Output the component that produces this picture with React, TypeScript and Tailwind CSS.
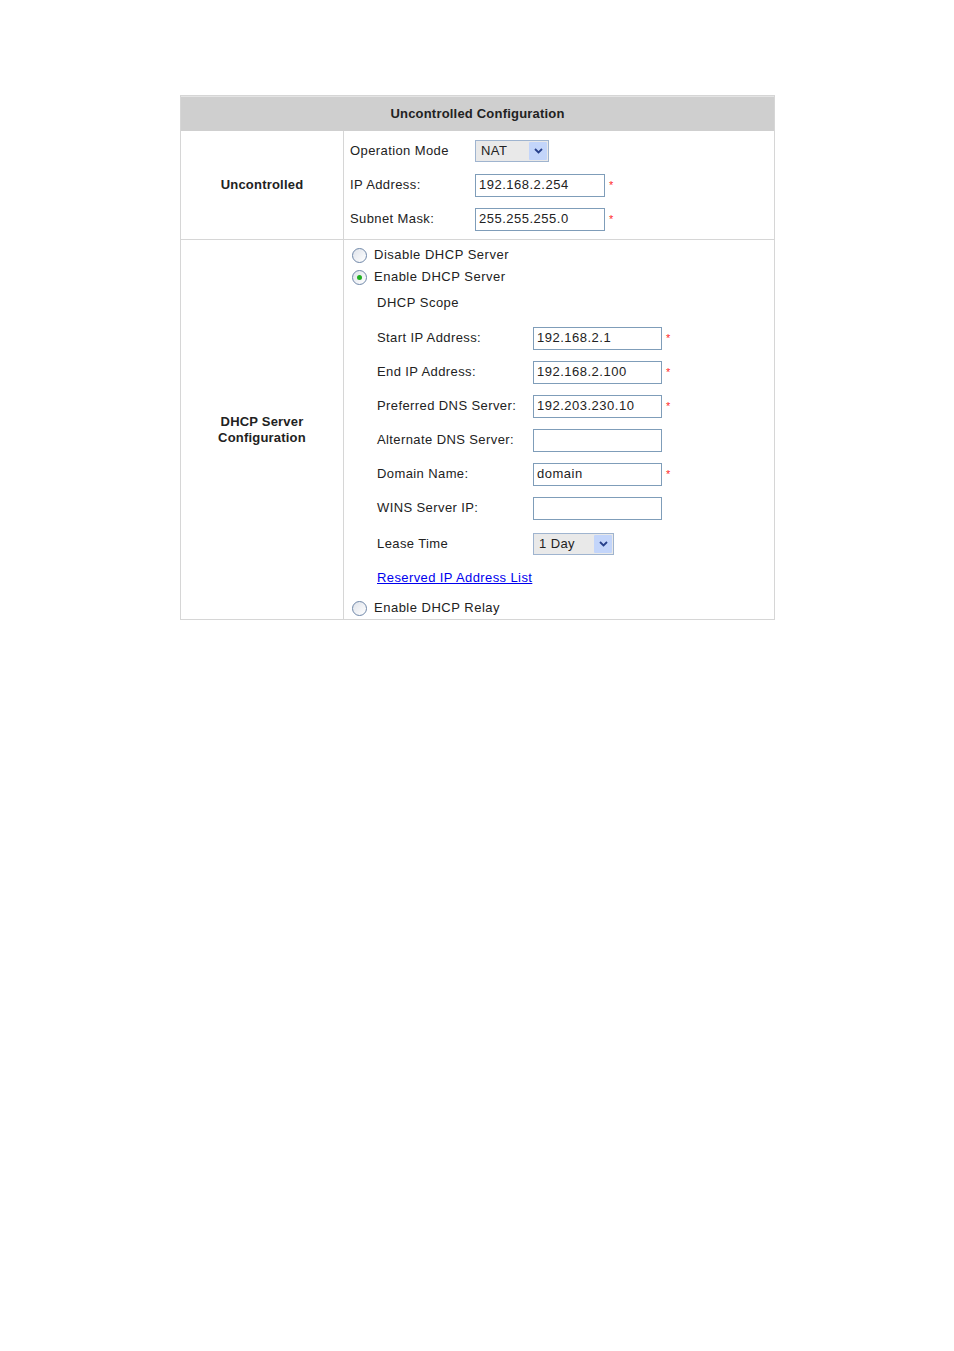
import React from 'react';

const font = { fontFamily: '"Liberation Sans", Arial, sans-serif' };

const Star = () => <span className="ml-[4px] text-[11px] leading-none text-[#ff2a2a]">*</span>;

const TextBox = ({ value, width = 'w-[129px]' }: { value: string; width?: string }) => (
  <div className={`${width} h-[23px] border border-[#7f9db9] bg-white px-[3px] flex items-center text-[13px] tracking-[0.5px] text-[#222]`}>
    {value}
  </div>
);

const SelectBox = ({ value, width }: { value: string; width: string }) => (
  <div className={`${width} h-[22px] border border-[#9fb4cf] bg-[#e9e9e9] flex items-center`}>
    <span className="flex-1 pl-[5px] text-[13px] tracking-[0.4px] text-[#222]">{value}</span>
    <span className="w-[18px] h-[18px] mr-[1px] bg-[#c3d5fa] flex items-center justify-center rounded-[1px]">
      <svg width="9" height="6" viewBox="0 0 9 6">
        <path d="M1 1l3.5 3.5L8 1" fill="none" stroke="#27408b" strokeWidth="1.8" />
      </svg>
    </span>
  </div>
);

const Radio = ({ checked, label }: { checked?: boolean; label: string }) => (
  <div className="h-[22px] flex items-center">
    <span className="w-[15px] h-[15px] rounded-full border border-[#6f87a8] bg-gradient-to-br from-[#dfe3ea] to-white flex items-center justify-center">
      {checked && <span className="w-[5px] h-[5px] rounded-full bg-[#20b020]" />}
    </span>
    <span className="ml-[7px] text-[13px] tracking-[0.5px] text-[#222]">{label}</span>
  </div>
);

const FormRow = ({ label, value, star }: { label: string; value: string; star?: boolean }) => (
  <div className="h-[34px] flex items-center pl-[25px]">
    <span className="w-[156px] text-[13px] tracking-[0.4px] text-[#222]">{label}</span>
    <TextBox value={value} />
    {star && <Star />}
  </div>
);

export default function App() {
  return (
    <div className="min-h-[1351px] bg-white pt-[95px] pl-[180px]" style={font}>
      <div className="w-[595px] border border-[#d6d6d6]">
        {/* Header */}
        <div className="h-[35px] bg-[#cfcfcf] border-t border-[#e4e4e4] flex items-center justify-center text-[13px] font-bold tracking-[0.2px] text-[#222]">
          Uncontrolled Configuration
        </div>

        {/* Uncontrolled */}
        <div className="flex border-b border-[#d6d6d6]">
          <div className="w-[163px] border-r border-[#d6d6d6] flex items-center justify-center text-[13px] font-bold tracking-[0.2px] text-[#222]">
            Uncontrolled
          </div>
          <div className="flex-1 pl-[6px] pt-[3px] pb-[3px]">
            <div className="h-[34px] flex items-center">
              <span className="w-[125px] text-[13px] tracking-[0.4px] text-[#222]">Operation Mode</span>
              <SelectBox value="NAT" width="w-[74px]" />
            </div>
            <div className="h-[34px] flex items-center">
              <span className="w-[125px] text-[13px] tracking-[0.4px] text-[#222]">IP Address:</span>
              <TextBox value="192.168.2.254" width="w-[130px]" />
              <Star />
            </div>
            <div className="h-[34px] flex items-center">
              <span className="w-[125px] text-[13px] tracking-[0.4px] text-[#222]">Subnet Mask:</span>
              <TextBox value="255.255.255.0" width="w-[130px]" />
              <Star />
            </div>
          </div>
        </div>

        {/* DHCP Server Configuration */}
        <div className="flex">
          <div className="w-[163px] border-r border-[#d6d6d6] flex items-center justify-center text-center text-[13px] font-bold leading-[16px] tracking-[0.2px] text-[#222]">
            DHCP Server
            <br />
            Configuration
          </div>
          <div className="flex-1 pl-[8px] pt-[4px]">
            <Radio label="Disable DHCP Server" />
            <Radio checked label="Enable DHCP Server" />
            <div className="h-[22px] mt-[4px] flex items-center pl-[25px] text-[13px] tracking-[0.5px] text-[#222]">
              DHCP Scope
            </div>
            <div className="mt-[7px]">
              <FormRow label="Start IP Address:" value="192.168.2.1" star />
              <FormRow label="End IP Address:" value="192.168.2.100" star />
              <FormRow label="Preferred DNS Server:" value="192.203.230.10" star />
              <FormRow label="Alternate DNS Server:" value="" />
              <FormRow label="Domain Name:" value="domain" star />
              <FormRow label="WINS Server IP:" value="" />
              <div className="h-[35px] flex items-center pl-[25px] pt-[2px]">
                <span className="w-[156px] text-[13px] tracking-[0.4px] text-[#222]">Lease Time</span>
                <SelectBox value="1 Day" width="w-[81px]" />
              </div>
            </div>
            <div className="h-[22px] mt-[7px] flex items-center pl-[25px]">
              <a href="#" className="text-[13px] tracking-[0.4px] text-[#0000ee] underline">
                Reserved IP Address List
              </a>
            </div>
            <div className="mt-[8px]">
              <Radio label="Enable DHCP Relay" />
            </div>
          </div>
        </div>
      </div>
    </div>
  );
}
